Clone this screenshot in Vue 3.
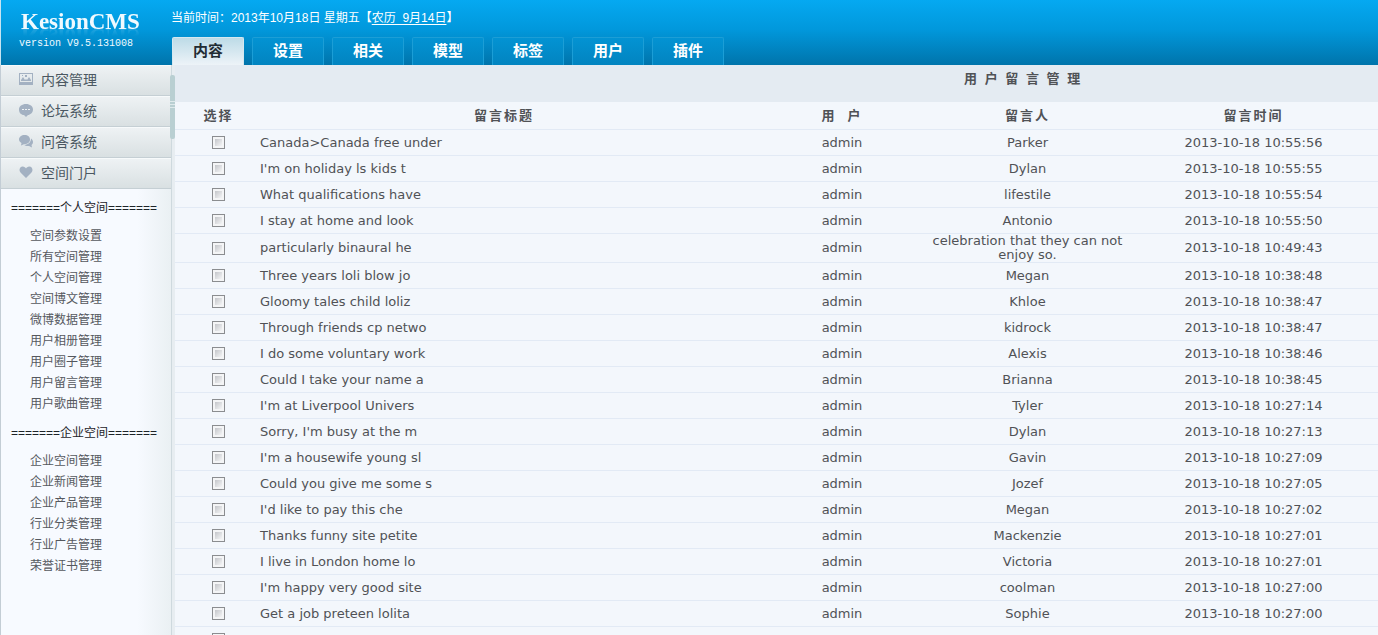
<script setup>
import { ref } from 'vue'

const tabs = ['内容', '设置', '相关', '模型', '标签', '用户', '插件']
const activeTab = ref('内容')

const modules = [
  { icon: 'picture', label: '内容管理' },
  { icon: 'bubble', label: '论坛系统' },
  { icon: 'chat', label: '问答系统' },
  { icon: 'heart', label: '空间门户' },
]

const groups = [
  {
    title: '=======个人空间=======',
    links: ['空间参数设置', '所有空间管理', '个人空间管理', '空间博文管理', '微博数据管理', '用户相册管理', '用户圈子管理', '用户留言管理', '用户歌曲管理'],
  },
  {
    title: '=======企业空间=======',
    links: ['企业空间管理', '企业新闻管理', '企业产品管理', '行业分类管理', '行业广告管理', '荣誉证书管理'],
  },
]

const messages = ref(
  [
    ['Canada>Canada free under', 'Parker', '10:55:56'],
    ["I'm on holiday ls kids t", 'Dylan', '10:55:55'],
    ['What qualifications have', 'lifestile', '10:55:54'],
    ['I stay at home and look', 'Antonio', '10:55:50'],
    ['particularly binaural he', 'celebration that they can not enjoy so.', '10:49:43'],
    ['Three years loli blow jo', 'Megan', '10:38:48'],
    ['Gloomy tales child loliz', 'Khloe', '10:38:47'],
    ['Through friends cp netwo', 'kidrock', '10:38:47'],
    ['I do some voluntary work', 'Alexis', '10:38:46'],
    ['Could I take your name a', 'Brianna', '10:38:45'],
    ["I'm at Liverpool Univers", 'Tyler', '10:27:14'],
    ["Sorry, I'm busy at the m", 'Dylan', '10:27:13'],
    ["I'm a housewife young sl", 'Gavin', '10:27:09'],
    ['Could you give me some s', 'Jozef', '10:27:05'],
    ["I'd like to pay this che", 'Megan', '10:27:02'],
    ['Thanks funny site petite', 'Mackenzie', '10:27:01'],
    ['I live in London home lo', 'Victoria', '10:27:01'],
    ["I'm happy very good site", 'coolman', '10:27:00'],
    ['Get a job preteen lolita', 'Sophie', '10:27:00'],
    ['', '', ''],
  ].map(([title, author, time]) => ({
    title,
    author,
    user: title ? 'admin' : '',
    time: time ? '2013-10-18 ' + time : '',
    checked: false,
  })),
)
</script>

<template>
  <div class="page">
    <header class="top">
      <div class="brand">
        <div class="logo">KesionCMS</div>
        <div class="version">version V9.5.131008</div>
      </div>
      <div class="bar">
        <div class="clock">当前时间：2013年10月18日 星期五【<a href="#">农历&nbsp; 9月14日</a>】</div>
        <nav class="tabs">
          <button
            v-for="tab in tabs"
            :key="tab"
            type="button"
            class="tab"
            :class="{ active: tab === activeTab }"
            @click="activeTab = tab"
          >{{ tab }}</button>
        </nav>
      </div>
    </header>

    <div class="body">
      <aside class="side">
        <button v-for="m in modules" :key="m.label" type="button" class="module">
          <svg v-if="m.icon === 'picture'" width="14" height="14" viewBox="0 0 14 14" aria-hidden="true">
            <path fill="#a3b1c2" fill-rule="evenodd" d="M0 1h14v12H0zM1 2v8h12V2z" />
            <path fill="#a3b1c2" d="M2 9V8l2-3 2 3 1-1 1 1 2-3 2 3v1zM6 3h2v2H6zM3 3h1v1H3z" />
          </svg>
          <svg v-else-if="m.icon === 'bubble'" width="14" height="14" viewBox="0 0 14 14" aria-hidden="true">
            <path fill="#a3b1c2" d="M7 1c4 0 7 2.300 7 5.500S11 12 9 12l-2 2-2-2C2 12 0 9.700 0 6.500S3 1 7 1z" />
            <path fill="#eef2f4" d="M3 6h2v1H3zM6 6h2v1H6zM9 6h2v1H9z" />
          </svg>
          <svg v-else-if="m.icon === 'chat'" width="14" height="14" viewBox="0 0 14 14" aria-hidden="true">
            <path fill="#a3b1c2" d="M5.500 1C9 1 11 3 11 5.500S9 10 5.500 10L2 11.500 2.500 9C1 8.200 0 7 0 5.500 0 3 2.500 1 5.500 1z" />
            <path fill="#a3b1c2" d="M12 4.500c1.400 1 2 2.200 2 3.500 0 1.200-.500 2.200-1.500 3l.500 2.500-3-1.500c-2 .300-4-.200-5-1.200 4 .200 7-2.300 7-6.300z" />
          </svg>
          <svg v-else width="14" height="14" viewBox="0 0 14 14" aria-hidden="true">
            <path fill="#a3b1c2" d="M7 13L1.500 7.500C-.500 5.300.700 1.500 3.700 1.500 5.300 1.500 6.500 2.500 7 3.500c.500-1 1.700-2 3.300-2 3 0 4.200 3.800 2.200 6z" />
          </svg>
          <span>{{ m.label }}</span>
        </button>
        <section v-for="g in groups" :key="g.title" class="group">
          <h2>{{ g.title }}</h2>
          <ul>
            <li v-for="link in g.links" :key="link"><a href="#">{{ link }}</a></li>
          </ul>
        </section>
        <div class="grip"></div>
      </aside>

      <main class="content">
        <h1>用 户 留 言 管 理</h1>
        <table>
          <colgroup>
            <col class="c-pick" />
            <col />
            <col class="c-user" />
            <col class="c-author" />
            <col class="c-time" />
          </colgroup>
          <thead>
            <tr>
              <th class="pick">选择</th>
              <th>留言标题</th>
              <th>用&nbsp; 户</th>
              <th>留言人</th>
              <th>留言时间</th>
            </tr>
          </thead>
          <tbody>
            <tr v-for="(row, i) in messages" :key="i">
              <td class="pick"><input v-model="row.checked" type="checkbox" :aria-label="row.title || '选择'" /></td>
              <td class="title">{{ row.title }}</td>
              <td>{{ row.user }}</td>
              <td>{{ row.author }}</td>
              <td>{{ row.time }}</td>
            </tr>
          </tbody>
        </table>
      </main>
    </div>
  </div>
</template>

<style>
body {
  overflow: hidden;
}
</style>

<style scoped>
.page {
  display: flex;
  flex-direction: column;
  height: 100vh;
  overflow: hidden;
  font-family: "Liberation Sans", "Noto Sans CJK SC", sans-serif;
  font-size: 12px;
  color: #505256;
}

.top {
  display: flex;
  flex: none;
  border-left: 1px solid #c6e4f2;
  background: linear-gradient(#05a9f1, #0198dc 45%, #0074ab);
}
.brand {
  width: 170px;
  flex: none;
  box-sizing: border-box;
  padding: 10px 0 0 18px;
  color: #f0faff;
}
.logo {
  padding-left: 2px;
  font: bold 23px/24px "Liberation Serif", serif;
  -webkit-box-reflect: below -10px linear-gradient(transparent 50%, rgba(255, 255, 255, 0.25));
}
.version {
  margin-top: 3px;
  font: 10px/14px "Liberation Mono", monospace;
}
.bar {
  flex: 1;
}
.clock {
  padding-top: 9px;
  line-height: 18px;
  color: #fff;
}
.clock a {
  color: #fff;
  text-underline-offset: 2px;
}
.tabs {
  display: flex;
  gap: 8px;
  margin-top: 10px;
  padding-left: 1px;
}
.tab {
  width: 72px;
  height: 28px;
  padding: 0 0 4px;
  border: 1px solid #1c9ed6;
  border-bottom: 0;
  border-radius: 2px 2px 0 0;
  background: linear-gradient(#0393d3, #0284c0);
  font: bold 15px/23px "Noto Sans CJK SC", sans-serif;
  color: #fff;
}
.tab.active {
  border-color: #d5e8f0;
  background: linear-gradient(#bddbe7, #edf3f8);
  color: #222c33;
}

.body {
  display: flex;
  flex: 1;
  min-height: 0;
}
.side {
  position: relative;
  flex: none;
  width: 172px;
  box-sizing: border-box;
  border-left: 1px solid #c3cdd5;
  border-right: 1px solid #ced9de;
  background: linear-gradient(90deg, #f7faff 80%, #eaf0f3);
}
.module {
  display: flex;
  align-items: center;
  gap: 8px;
  width: 100%;
  height: 31px;
  padding: 0 0 4px 18px;
  border: 0;
  border-top: 1px solid #f7fafb;
  border-bottom: 1px solid #c5cfd4;
  background: linear-gradient(#eef2f4, #d9e0e2);
  font: 14px/20px "Noto Sans CJK SC", sans-serif;
  color: #4b5862;
}
.group h2 {
  margin: 0;
  padding: 10px 0 9px 10px;
  font-size: 12px;
  line-height: 18px;
  font-weight: normal;
  color: #1d2329;
}
.group + .group h2 {
  padding-top: 9px;
}
.group ul {
  margin: 0;
  padding: 0 0 0 29px;
  list-style: none;
}
.group li {
  line-height: 21px;
}
.group a {
  color: #55585e;
  text-decoration: none;
}
.grip {
  position: absolute;
  top: 10px;
  right: -4px;
  width: 5px;
  height: 64px;
  border-radius: 2px;
  background: linear-gradient(#b9cfd2 26px, #dfeaec 26px, #dfeaec 27px, #b9cfd2 27px, #b9cfd2 29px, #dfeaec 29px, #dfeaec 30px, #b9cfd2 30px, #b9cfd2 32px, #dfeaec 32px, #dfeaec 33px, #b9cfd2 33px);
}

.content {
  flex: 1;
  min-width: 0;
  border-left: 3px solid #e7edf1;
  background: #f3f7fc;
}
h1 {
  margin: 0;
  padding: 4px 0 13px 41%;
  background: #e4ebf2;
  font: bold 13px/20px "Liberation Sans", "Noto Sans CJK SC", sans-serif;
  letter-spacing: 2px;
  text-align: center;
}
table {
  width: 100%;
  table-layout: fixed;
  border-collapse: separate;
  border-spacing: 0;
  font: 13px/14px "DejaVu Sans", "Noto Sans CJK SC", sans-serif;
}
.c-pick {
  width: 75px;
}
.c-user {
  width: 168px;
}
.c-author {
  width: 203px;
}
.c-time {
  width: 249px;
}
th,
td {
  box-sizing: border-box;
  height: 26px;
  padding: 0;
  border-bottom: 1px solid #e2eaf5;
  text-align: center;
}
th {
  height: 28px;
  font-family: "Liberation Sans", "Noto Sans CJK SC", sans-serif;
  letter-spacing: 2px;
}
td.title {
  padding-left: 10px;
  text-align: left;
}
.pick {
  padding-left: 12px;
}
input {
  appearance: none;
  display: block;
  width: 13px;
  height: 13px;
  margin: 0 auto;
  border: 1px solid #8b8d90;
  background: linear-gradient(135deg, #c4c6ca, #f4f5f6) content-box, #f4f5f6;
  padding: 2px;
  box-sizing: border-box;
}
input:checked {
  background: #3b6ea8 content-box;
}
</style>
